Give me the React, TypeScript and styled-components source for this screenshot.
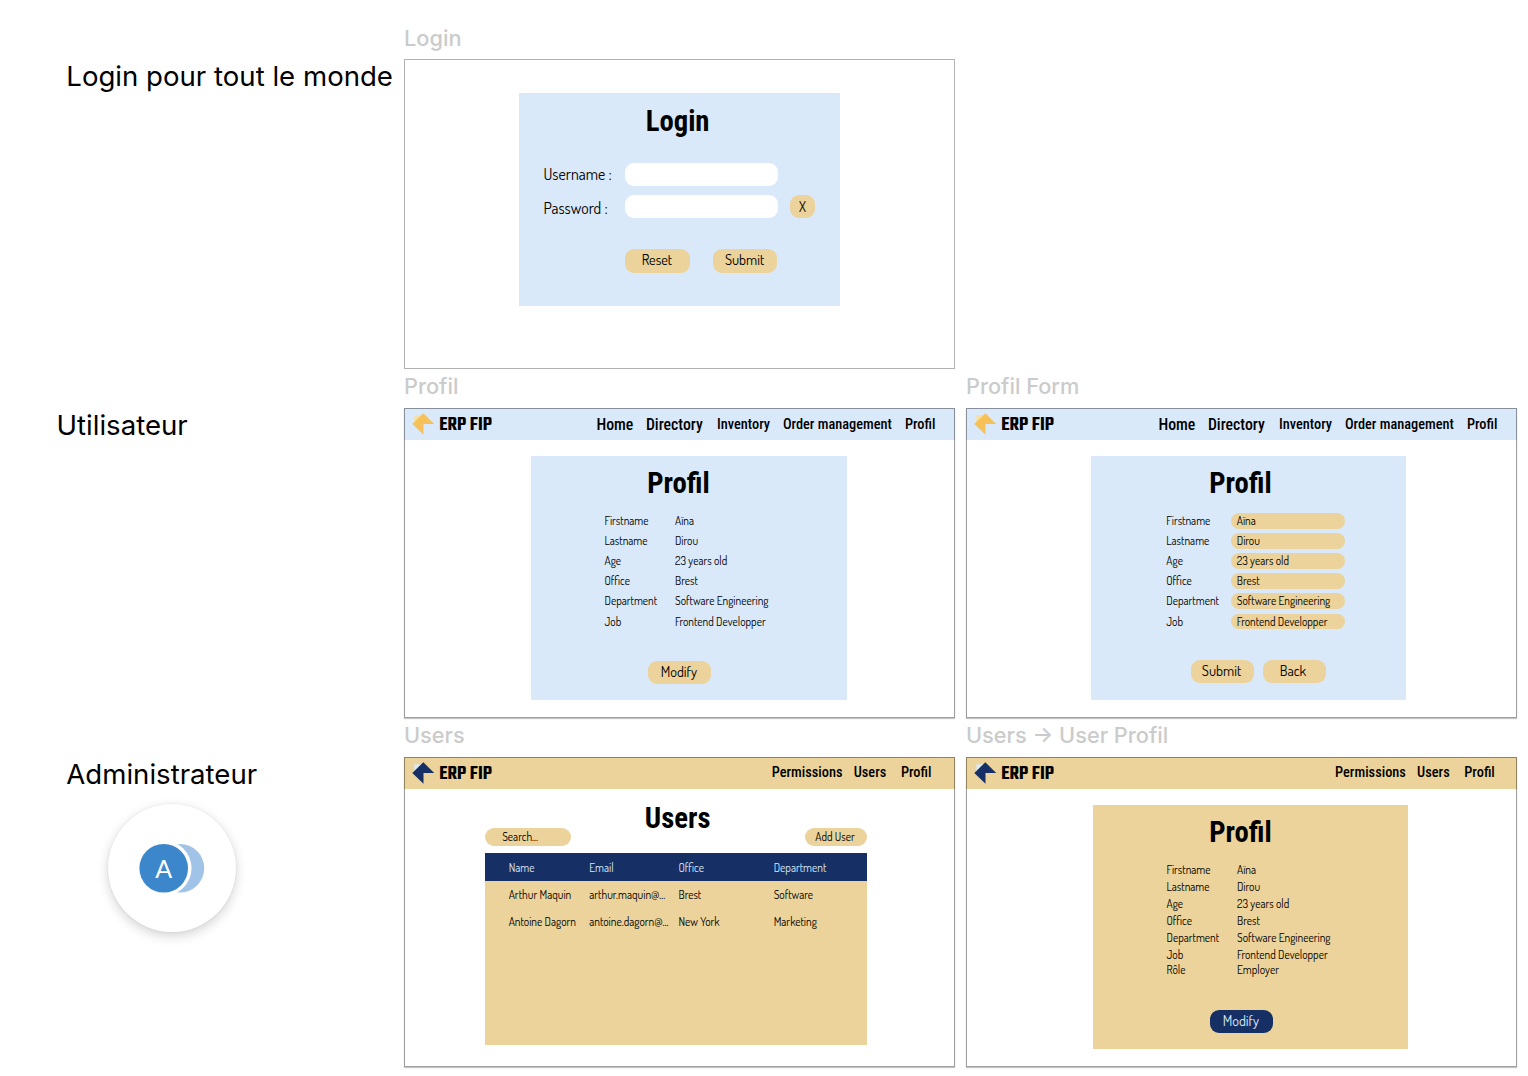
import React from "react";
import styled, { createGlobalStyle } from "styled-components";

const BLUE = "#dae9f9";
const SAND = "#ebd39b";
const NAVY = "#163066";

const GlobalStyle = createGlobalStyle`
  * { box-sizing: border-box; }
  body { margin: 0; background: #fff; color: #000; overflow: hidden; }
`;

const dosis = `Dosis, "Open Sans", sans-serif`;
const condensed = `"Roboto Condensed", Roboto, sans-serif`;

const Board = styled.main`
  display: grid;
  grid-template-columns: 404px 551px 551px;
  grid-auto-rows: 349px;
  width: 1528px;
  height: 1076px;
  padding-top: 20px;
  font-family: Inter, sans-serif;
  & > section + section { margin-left: 11px; margin-right: -11px; }
`;

const RoleColumn = styled.aside<{ $indent: number }>`
  grid-column: 1;
  padding: 36px 0 0 ${p => p.$indent}px;
`;

const RoleName = styled.h2`
  margin: 0;
  font-size: 27.6px;
  font-weight: 400;
  line-height: 40px;
  white-space: nowrap;
`;

const Badge = styled.div`
  display: grid;
  place-items: center;
  width: 128px;
  height: 128px;
  margin: 10px 0 0 42px;
  border-radius: 50%;
  background: #fff;
  box-shadow: 0 4px 12px rgba(0, 0, 0, 0.17), 0 0 3px rgba(0, 0, 0, 0.07);
`;

const ScreenBlock = styled.section`
  width: 551px;
`;

const ScreenLabel = styled.div<{ $raised?: boolean }>`
  height: 39px;
  color: #cbcbcb;
  font-size: 21.75px;
  font-weight: 450;
  line-height: ${p => (p.$raised ? 34 : 36)}px;
  white-space: nowrap;
`;

const Frame = styled.div<{ $raised?: boolean }>`
  position: relative;
  display: flow-root;
  height: 310px;
  background: #fff;
  box-shadow: ${p => (p.$raised ? "0 1px 1px rgba(0,0,0,.22)" : "none")};
  &::after {
    content: "";
    position: absolute;
    inset: 0;
    border: 1px solid rgba(0, 0, 0, ${p => (p.$raised ? 0.38 : 0.3)});
    pointer-events: none;
  }
`;

const Header = styled.header<{ $bg: string }>`
  display: flex;
  height: 32px;
  padding-left: 8px;
  background: ${p => p.$bg};
`;

const Logo = styled.svg`
  width: 24px;
  height: 32px;
  flex: none;
`;

const Brand = styled.span`
  width: 60px;
  margin-left: 3.3px;
  font-family: Teko, ${condensed};
  font-size: 20.2px;
  font-weight: 600;
  line-height: 35px;
  white-space: nowrap;
`;

const Nav = styled.nav<{ $start: number; $columns: string }>`
  display: grid;
  grid-template-columns: ${p => p.$columns};
  margin-left: ${p => p.$start - 95.3}px;
`;

const NavItem = styled.a<{ $large?: boolean; $line?: number }>`
  font-family: ${condensed};
  font-size: ${p => (p.$large ? 15.8 : 14.35)}px;
  font-weight: 500;
  line-height: ${p => p.$line ?? 34}px;
  white-space: nowrap;
`;

const Panel = styled.div<{ $bg: string; $left: number; $top: number; $width: number; $height: number }>`
  display: flow-root;
  width: ${p => p.$width}px;
  height: ${p => p.$height}px;
  margin: ${p => p.$top}px 0 0 ${p => p.$left}px;
  background: ${p => p.$bg};
`;

const Title = styled.h1<{ $left: number; $top: number }>`
  margin: ${p => p.$top}px 0 0 ${p => p.$left}px;
  font-family: ${condensed};
  font-size: 28.7px;
  font-weight: 700;
  line-height: 34px;
`;

const LoginForm = styled.div`
  display: grid;
  grid-template-columns: 81.5px 152.5px 25px;
  grid-template-rows: 23px 23px;
  gap: 9px 0;
  margin: 25px 0 0 24.5px;
  & > :last-child { margin-left: 12.5px; width: 25px; }
`;

const FieldLabel = styled.label<{ $drop: number }>`
  padding-top: ${p => p.$drop}px;
  font-family: ${dosis};
  font-size: 15.85px;
  line-height: 21px;
  white-space: nowrap;
`;

const Field = styled.div`
  border-radius: 9px;
  background: #fff;
`;

const Button = styled.button<{ $width?: number; $navy?: boolean; $shift?: number; $lift?: number }>`
  display: flex;
  align-items: center;
  justify-content: center;
  width: ${p => p.$width ?? 63}px;
  height: 23.3px;
  padding: 0 ${p => p.$shift ?? 0}px ${p => p.$lift ?? 3}px 0;
  border: 0;
  border-radius: 9px;
  background: ${p => (p.$navy ? NAVY : SAND)};
  color: ${p => (p.$navy ? "#dae9f9" : "#000")};
  font-family: ${dosis};
  font-size: 14.35px;
  line-height: 20px;
`;

const ButtonRow = styled.div<{ $left: number; $top: number; $gap?: number }>`
  display: flex;
  gap: ${p => p.$gap ?? 0}px;
  margin: ${p => p.$top}px 0 0 ${p => p.$left}px;
`;

const Details = styled.dl<{ $left: number; $top: number; $value: number }>`
  display: grid;
  grid-template-columns: ${p => p.$value}px 114px;
  margin: ${p => p.$top}px 0 0 ${p => p.$left}px;
  font-family: ${dosis};
  font-size: 11.48px;
  line-height: 16.2px;
`;

const Term = styled.dt<{ $pitch: number; $pull?: number }>`
  height: ${p => p.$pitch}px;
  margin-top: ${p => -(p.$pull ?? 0)}px;
`;

const Value = styled.dd<{ $boxed?: boolean; $pull?: number }>`
  height: 15.8px;
  margin: ${p => -(p.$pull ?? 0)}px 0 0;
  padding-left: ${p => (p.$boxed ? 5.7 : 0)}px;
  border-radius: 8px;
  background: ${p => (p.$boxed ? SAND : "transparent")};
  white-space: nowrap;
`;

const Toolbar = styled.div`
  display: flex;
  justify-content: space-between;
  width: 382px;
  margin: -7px 0 0 81px;
`;

const Pill = styled.div<{ $width: number; $pad: number }>`
  width: ${p => p.$width}px;
  height: 18px;
  padding-left: ${p => p.$pad}px;
  border-radius: 9px;
  background: ${SAND};
  font-family: ${dosis};
  font-size: 11.48px;
  line-height: 18.6px;
  white-space: nowrap;
`;

const Table = styled.div`
  width: 382px;
  height: 192px;
  margin: 7px 0 0 81px;
  background: ${SAND};
  font-family: ${dosis};
  font-size: 11.48px;
`;

const TableRow = styled.div<{ $head?: boolean }>`
  display: grid;
  grid-template-columns: 80.6px 89.2px 95.2px 80px;
  height: ${p => (p.$head ? 28.3 : 26.3)}px;
  padding-left: 23.7px;
  background: ${p => (p.$head ? NAVY : "transparent")};
  color: ${p => (p.$head ? "#dae9f9" : "#000")};
  line-height: ${p => (p.$head ? 29 : 27.8)}px;
  white-space: nowrap;
`;

type Tone = "user" | "admin";

function TopBar({ tone, shift = 0 }: { tone: Tone; shift?: number }) {
  const admin = tone === "admin";
  return (
    <Header $bg={admin ? SAND : BLUE}>
      <Logo viewBox="0 0 24 32">
        <path d="M2.3 7.3h9v9h-9z" fill={admin ? "#dae9f3" : "#f7dfa8"} />
        <path d="M11.3 5.2 22.2 16H11.5v10.7L.3 16Z" fill={admin ? NAVY : "#f6c159"} />
      </Logo>
      <Brand>ERP FIP</Brand>
      {admin ? (
        <Nav $start={367.7 + shift} $columns="82px 47.2px 31px">
          <NavItem $line={32}>Permissions</NavItem>
          <NavItem $line={32}>Users</NavItem>
          <NavItem $line={32}>Profil</NavItem>
        </Nav>
      ) : (
        <Nav $start={192.4} $columns="49.5px 71.2px 65.8px 122px 31px">
          <NavItem $large>Home</NavItem>
          <NavItem $large>Directory</NavItem>
          <NavItem>Inventory</NavItem>
          <NavItem>Order management</NavItem>
          <NavItem>Profil</NavItem>
        </Nav>
      )}
    </Header>
  );
}

const profile: [string, string][] = [
  ["Firstname", "Aïna"],
  ["Lastname", "Dirou"],
  ["Age", "23 years old"],
  ["Office", "Brest"],
  ["Department", "Software Engineering"],
  ["Job", "Frontend Developper"],
];

const users = [
  ["Arthur Maquin", "arthur.maquin@...", "Brest", "Software"],
  ["Antoine Dagorn", "antoine.dagorn@...", "New York", "Marketing"],
];

function Rows({ data, pitch, boxed }: { data: [string, string][]; pitch: number; boxed?: boolean }) {
  return (
    <>
      {data.map(([term, value]) => (
        <React.Fragment key={term}>
          <Term $pitch={pitch}>{term}</Term>
          <Value $boxed={boxed}>{value}</Value>
        </React.Fragment>
      ))}
    </>
  );
}

export default function App() {
  return (
    <>
      <GlobalStyle />
      <Board>
        <RoleColumn $indent={66.3}>
          <RoleName>Login pour tout le monde</RoleName>
        </RoleColumn>
        <ScreenBlock>
          <ScreenLabel>Login</ScreenLabel>
          <Frame>
            <Panel $bg={BLUE} $left={115} $top={34} $width={321} $height={213}>
              <Title $left={126.7} $top={11}>Login</Title>
              <LoginForm>
                <FieldLabel $drop={1}>Username :</FieldLabel>
                <Field />
                <span />
                <FieldLabel $drop={3}>Password :</FieldLabel>
                <Field />
                <Button $width={25} $lift={1}>X</Button>
              </LoginForm>
              <ButtonRow $left={106} $top={31.3} $gap={23}>
                <Button $width={64.7} $shift={1}>Reset</Button>
                <Button $width={64.7} $shift={1}>Submit</Button>
              </ButtonRow>
            </Panel>
          </Frame>
        </ScreenBlock>

        <RoleColumn $indent={56.5}>
          <RoleName>Utilisateur</RoleName>
        </RoleColumn>
        <ScreenBlock>
          <ScreenLabel $raised>Profil</ScreenLabel>
          <Frame $raised>
            <TopBar tone="user" />
            <Panel $bg={BLUE} $left={127} $top={16} $width={316} $height={244.4}>
              <Title $left={116.2} $top={10}>Profil</Title>
              <Details $left={73.5} $top={13} $value={70.5}>
                <Rows data={profile} pitch={20.12} />
              </Details>
              <ButtonRow $left={117.3} $top={27}>
                <Button $shift={2}>Modify</Button>
              </ButtonRow>
            </Panel>
          </Frame>
        </ScreenBlock>
        <ScreenBlock>
          <ScreenLabel $raised>Profil Form</ScreenLabel>
          <Frame $raised>
            <TopBar tone="user" />
            <Panel $bg={BLUE} $left={125} $top={15.5} $width={315.4} $height={244.5}>
              <Title $left={118.2} $top={10.5}>Profil</Title>
              <Details $left={75.3} $top={13} $value={64.8}>
                <Rows data={profile} pitch={20.12} boxed />
              </Details>
              <ButtonRow $left={100} $top={26} $gap={9.4}>
                <Button $shift={2}>Submit</Button>
                <Button $shift={4}>Back</Button>
              </ButtonRow>
            </Panel>
          </Frame>
        </ScreenBlock>

        <RoleColumn $indent={66.3}>
          <RoleName>Administrateur</RoleName>
          <Badge>
            <svg width="128" height="128" viewBox="0 0 128 128">
              <circle cx="71.9" cy="64.2" r="24.3" fill="#a0c3e7" />
              <circle cx="55.7" cy="64.2" r="27.8" fill="#fff" />
              <circle cx="55.7" cy="64.2" r="24.3" fill="#3c87cb" />
              <text x="55.7" y="73.6" textAnchor="middle" fontFamily="Lato, sans-serif" fontSize="25" fill="#fff">A</text>
            </svg>
          </Badge>
        </RoleColumn>
        <ScreenBlock>
          <ScreenLabel $raised>Users</ScreenLabel>
          <Frame $raised>
            <TopBar tone="admin" />
            <Title $left={240.8} $top={12}>Users</Title>
            <Toolbar>
              <Pill $width={86.3} $pad={17.2}>Search...</Pill>
              <Pill $width={62.4} $pad={10.7}>Add User</Pill>
            </Toolbar>
            <Table>
              <TableRow $head>
                <span>Name</span>
                <span>Email</span>
                <span>Office</span>
                <span>Department</span>
              </TableRow>
              {users.map(row => (
                <TableRow key={row[0]}>
                  {row.map(cell => (
                    <span key={cell}>{cell}</span>
                  ))}
                </TableRow>
              ))}
            </Table>
          </Frame>
        </ScreenBlock>
        <ScreenBlock>
          <ScreenLabel $raised>Users → User Profil</ScreenLabel>
          <Frame $raised>
            <TopBar tone="admin" shift={1.4} />
            <Panel $bg={SAND} $left={127} $top={15.6} $width={315.4} $height={244.8}>
              <Title $left={116.2} $top={10.5}>Profil</Title>
              <Details $left={73.5} $top={13} $value={70.5}>
                <Rows data={profile} pitch={17} />
                <Term $pitch={16} $pull={2}>Rôle</Term>
                <Value $pull={2}>Employer</Value>
              </Details>
              <ButtonRow $left={117.3} $top={31.5}>
                <Button $navy $shift={2}>Modify</Button>
              </ButtonRow>
            </Panel>
          </Frame>
        </ScreenBlock>
      </Board>
    </>
  );
}
